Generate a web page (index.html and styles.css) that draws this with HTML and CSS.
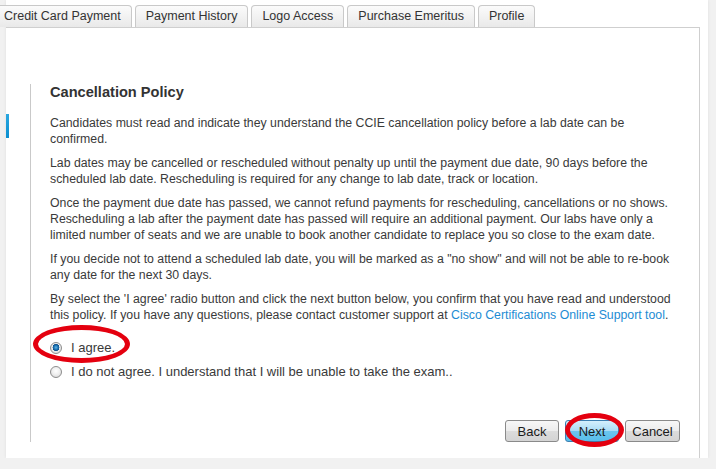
FILE: index.html
```html
<!DOCTYPE html>
<html lang="en">
<head>
<meta charset="utf-8">
<title>Cancellation Policy</title>
<link rel="stylesheet" href="styles.css">
</head>
<body>
<div class="card">
  <nav class="tabs">
    <span class="tab">Credit Card Payment</span>
    <span class="tab">Payment History</span>
    <span class="tab">Logo Access</span>
    <span class="tab">Purchase Emeritus</span>
    <span class="tab">Profile</span>
  </nav>
  <div class="panel">
    <div class="side"><span class="step-mark"></span></div>
    <section class="policy">
      <h2 class="title">Cancellation Policy</h2>
      <p class="para">Candidates must read and indicate they understand the CCIE cancellation policy before a lab date can be confirmed.</p>
      <p class="para">Lab dates may be cancelled or rescheduled without penalty up until the payment due date, 90 days before the scheduled lab date. Rescheduling is required for any change to lab date, track or location.</p>
      <p class="para">Once the payment due date has passed, we cannot refund payments for rescheduling, cancellations or no shows. Rescheduling a lab after the payment date has passed will require an additional payment. Our labs have only a limited number of seats and we are unable to book another candidate to replace you so close to the exam date.</p>
      <p class="para">If you decide not to attend a scheduled lab date, you will be marked as a "no show" and will not be able to re-book any date for the next 30 days.</p>
      <p class="para">By select the 'I agree' radio button and click the next button below, you confirm that you have read and understood this policy. If you have any questions, please contact customer support at <a class="link" href="#">Cisco Certifications Online Support tool</a>.</p>
      <div class="choices">
        <label class="choice"><input class="radio" type="radio" name="agree" checked><span>I agree.</span></label>
        <label class="choice"><input class="radio" type="radio" name="agree"><span>I do not agree. I understand that I will be unable to take the exam..</span></label>
      </div>
      <div class="actions">
        <button class="btn" type="button">Back</button>
        <button class="btn btn-primary" type="button">Next</button>
        <button class="btn" type="button">Cancel</button>
      </div>
    </section>
  </div>
  <span class="mark mark-agree"></span>
  <span class="mark mark-next"></span>
</div>
</body>
</html>
```
FILE: styles.css
```css
* { box-sizing: border-box; }

html, body {
  margin: 0;
  padding: 0;
  background: #f1f1f1;
  font-family: "Liberation Sans", Arial, sans-serif;
  color: #333;
}

.card {
  position: relative;
  margin-left: 6px;
  width: 702px;
  height: 458px;
  background: #fff;
  box-shadow: 0 0 3px rgba(0, 0, 0, 0.08);
  display: flex;
  flex-direction: column;
}

.tabs {
  display: flex;
  gap: 3px;
  margin-left: -13px;
  padding-top: 5px;
  height: 27px;
}

.tab {
  display: block;
  height: 22px;
  padding: 0 10px;
  line-height: 21px;
  font-size: 12.5px;
  color: #333;
  border: 1px solid #c9c9c9;
  border-bottom: none;
  border-radius: 4px 4px 0 0;
  background: linear-gradient(#fbfbfb, #e9e9e9);
  white-space: nowrap;
}

.panel {
  flex: 1;
  width: 694px;
  border-top: 1px solid #cfcfcf;
  border-right: 1px solid #cfcfcf;
  display: flex;
  padding-top: 56px;
  padding-bottom: 16px;
}

.side {
  width: 24px;
  flex: none;
}

.step-mark {
  display: block;
  margin-top: 30px;
  width: 3px;
  height: 24px;
  background: linear-gradient(#2aa7e0, #0a8fd0);
}

.policy {
  width: 650px;
  border-left: 1px solid #c9c9c9;
  padding-left: 19px;
  display: flex;
  flex-direction: column;
}

.title {
  margin: 0 0 14px;
  font-size: 14.6px;
  line-height: 17px;
  font-weight: bold;
  color: #333;
}

.para {
  margin: 0 0 8px;
  font-size: 12.3px;
  line-height: 16px;
  color: #3a3a3a;
}

.link {
  color: #1d8cd4;
  text-decoration: none;
}

.choices {
  margin-top: 9px;
  display: flex;
  flex-direction: column;
  gap: 8px;
}

.choice {
  display: flex;
  align-items: center;
  gap: 9px;
  font-size: 13px;
  line-height: 16px;
  color: #3a3a3a;
}

.radio {
  appearance: none;
  -webkit-appearance: none;
  margin: 0;
  width: 12px;
  height: 12px;
  border-radius: 50%;
  border: 1px solid #8d8d8d;
  background: radial-gradient(circle at 50% 40%, #ffffff 0, #f0f0f0 45%, #d2d2d2 100%);
}

.radio:checked {
  background:
    radial-gradient(circle at 50% 45%, #5fb6e6 0, #1a6fb0 2.2px, #0f4f88 3.3px, transparent 3.6px),
    radial-gradient(circle at 50% 40%, #ffffff 0, #f0f0f0 45%, #d2d2d2 100%);
}

.actions {
  margin-top: auto;
  display: flex;
  justify-content: flex-end;
  gap: 6px;
}

.btn {
  min-width: 54px;
  height: 22px;
  padding: 0 6px;
  font-family: "Liberation Sans", Arial, sans-serif;
  font-size: 13px;
  color: #1a1a1a;
  border: 1px solid #8a8a8a;
  border-radius: 3px;
  background: linear-gradient(#f7f7f7 0, #ececec 50%, #dcdcdc 51%, #d4d4d4 100%);
}

.btn:last-child { min-width: 55px; }

.btn-primary {
  border-color: #3c7fb1;
  background: linear-gradient(#d4effc 0, #a9dcf6 50%, #6cc6ee 51%, #58bdea 100%);
}

.mark {
  position: absolute;
  border: 5px solid #e4000f;
  border-radius: 50%;
  pointer-events: none;
}

.mark-agree {
  left: 27px;
  top: 325px;
  width: 97px;
  height: 38px;
}

.mark-next {
  left: 559px;
  top: 413px;
  width: 59px;
  height: 34px;
}
```
